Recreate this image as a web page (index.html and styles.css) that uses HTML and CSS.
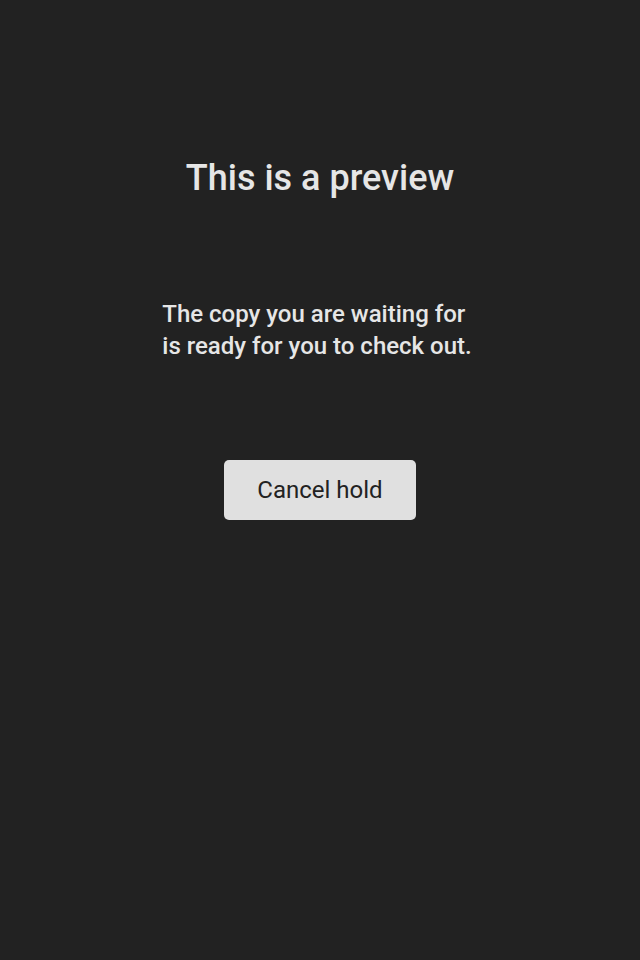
FILE: index.html
```html
<!DOCTYPE html>
<html>
<head>
<meta charset="utf-8">
<link rel="stylesheet" href="styles.css">
</head>
<body>
<main class="page">
  <h1 class="title">This is a preview</h1>
  <p class="message">The copy you are waiting for<br>is ready for you to check out.</p>
  <button class="btn">Cancel hold</button>
</main>
</body>
</html>
```
FILE: styles.css
```css
html, body {
  margin: 0;
  padding: 0;
  background: #222222;
  height: 100%;
}
.page {
  display: flex;
  flex-direction: column;
  align-items: center;
  font-family: Roboto, "Noto Sans", sans-serif;
  color: #e6e6e6;
  padding-top: 156px;
}
.title {
  margin: 0;
  font-size: 36px;
  font-weight: 500;
  line-height: 44px;
}
.message {
  margin: 98px 0 0;
  padding-right: 6px;
  font-size: 24px;
  font-weight: 500;
  line-height: 32px;
  text-align: left;
}
.btn {
  margin-top: 98px;
  width: 192px;
  height: 60px;
  border: none;
  border-radius: 5px;
  background: #e0e0e0;
  color: #222222;
  font-family: Roboto, "Noto Sans", sans-serif;
  font-size: 24px;
  font-weight: 400;
  padding: 0;
}
```
